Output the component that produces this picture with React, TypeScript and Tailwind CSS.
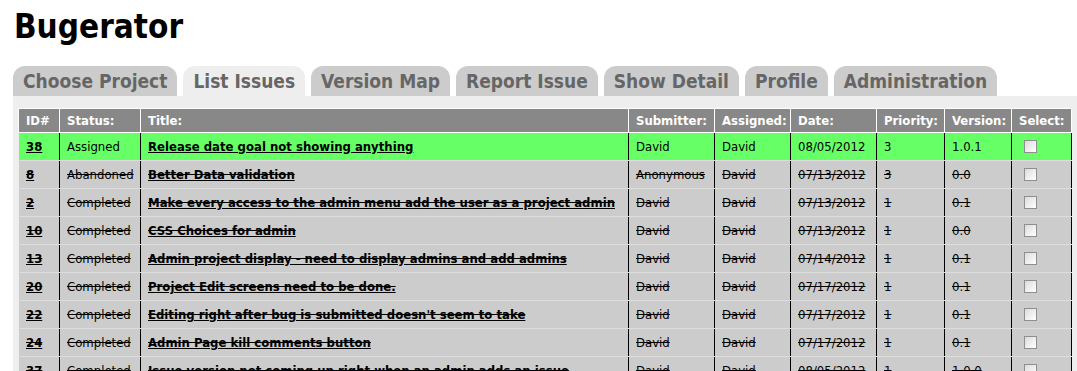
import React from "react";

type Row = {
  id: string;
  status: string;
  title: string;
  sub: string;
  asg: string;
  date: string;
  pri: string;
  ver: string;
  active?: boolean;
};

const rows: Row[] = [
  { id: "38", status: "Assigned", title: "Release date goal not showing anything", sub: "David", asg: "David", date: "08/05/2012", pri: "3", ver: "1.0.1", active: true },
  { id: "8", status: "Abandoned", title: "Better Data validation", sub: "Anonymous", asg: "David", date: "07/13/2012", pri: "3", ver: "0.0" },
  { id: "2", status: "Completed", title: "Make every access to the admin menu add the user as a project admin", sub: "David", asg: "David", date: "07/13/2012", pri: "1", ver: "0.1" },
  { id: "10", status: "Completed", title: "CSS Choices for admin", sub: "David", asg: "David", date: "07/13/2012", pri: "1", ver: "0.0" },
  { id: "13", status: "Completed", title: "Admin project display - need to display admins and add admins", sub: "David", asg: "David", date: "07/14/2012", pri: "1", ver: "0.1" },
  { id: "20", status: "Completed", title: "Project Edit screens need to be done.", sub: "David", asg: "David", date: "07/17/2012", pri: "1", ver: "0.1" },
  { id: "22", status: "Completed", title: "Editing right after bug is submitted doesn't seem to take", sub: "David", asg: "David", date: "07/17/2012", pri: "1", ver: "0.1" },
  { id: "24", status: "Completed", title: "Admin Page kill comments button", sub: "David", asg: "David", date: "07/17/2012", pri: "1", ver: "0.1" },
  { id: "37", status: "Completed", title: "Issue version not coming up right when an admin adds an issue", sub: "David", asg: "David", date: "08/05/2012", pri: "1", ver: "1.0.0" },
];

const tabs = ["Choose Project", "List Issues", "Version Map", "Report Issue", "Show Detail", "Profile", "Administration"];

const headers = ["ID#", "Status:", "Title:", "Submitter:", "Assigned:", "Date:", "Priority:", "Version:", "Select:"];
const widths = ["w-[41px]", "w-[81px]", "w-[488px]", "w-[86px]", "w-[76px]", "w-[86px]", "w-[68px]", "w-[67px]", "w-[60px]"];

export default function App() {
  const font = { fontFamily: '"DejaVu Sans Condensed", "DejaVu Sans", Verdana, sans-serif' };
  return (
    <div className="w-[1077px] h-[371px] overflow-hidden bg-white text-black" style={font}>
      <h1 className="ml-[14px] mt-[9px] h-[35px] text-[33px] leading-[36px] font-bold">Bugerator</h1>
      <div className="ml-[13px] mt-[22px] flex gap-[6px]">
        {tabs.map((t) => (
          <div
            key={t}
            className={`h-[30px] px-[10px] rounded-t-[12px] flex items-center text-[19px] font-bold text-[#666666] ${t === "List Issues" ? "bg-[#eeeeee]" : "bg-[#cccccc]"}`}
          >
            {t}
          </div>
        ))}
      </div>
      <div className="ml-[13px] bg-[#eeeeee] pl-[5px] pt-[12px] pb-[20px]">
        <table className="table-fixed border-collapse w-[1054px] text-[13px]">
          <colgroup>
            {widths.map((w, i) => (
              <col key={i} className={w} />
            ))}
          </colgroup>
          <thead>
            <tr>
              {headers.map((h) => (
                <th
                  key={h}
                  className="h-[24px] border border-white bg-[#888888] text-white font-bold text-left pl-[7px] py-0 leading-none"
                >
                  {h}
                </th>
              ))}
            </tr>
          </thead>
          <tbody>
            {rows.map((r) => {
              const strike = r.active ? "" : "line-through";
              const linkDeco = r.active ? "underline" : "[text-decoration-line:underline_line-through]";
              const bg = r.active ? "bg-[#66ff66]" : "bg-[#cccccc]";
              const cell = `h-[28px] border-x border-x-black border-y border-y-[#dddddd] pl-[7px] py-0 leading-none ${bg}`;
              return (
                <tr key={r.id}>
                  <td className={`${cell} border-l-[#eeeeee]`}>
                    <a className={`font-bold ${linkDeco}`}>{r.id}</a>
                  </td>
                  <td className={cell}>
                    <span className={strike}>{r.status}</span>
                  </td>
                  <td className={cell}>
                    <a className={`font-bold ${linkDeco} whitespace-nowrap`}>{r.title}</a>
                  </td>
                  <td className={cell}>
                    <span className={strike}>{r.sub}</span>
                  </td>
                  <td className={cell}>
                    <span className={strike}>{r.asg}</span>
                  </td>
                  <td className={cell}>
                    <span className={strike}>{r.date}</span>
                  </td>
                  <td className={cell}>
                    <span className={strike}>{r.pri}</span>
                  </td>
                  <td className={cell}>
                    <span className={strike}>{r.ver}</span>
                  </td>
                  <td className={`${cell} pl-[12px]`}>
                    <div className="w-[13px] h-[13px] border border-[#8f8f8f] bg-gradient-to-br from-[#dcdcdc] to-white" />
                  </td>
                </tr>
              );
            })}
          </tbody>
        </table>
      </div>
    </div>
  );
}
